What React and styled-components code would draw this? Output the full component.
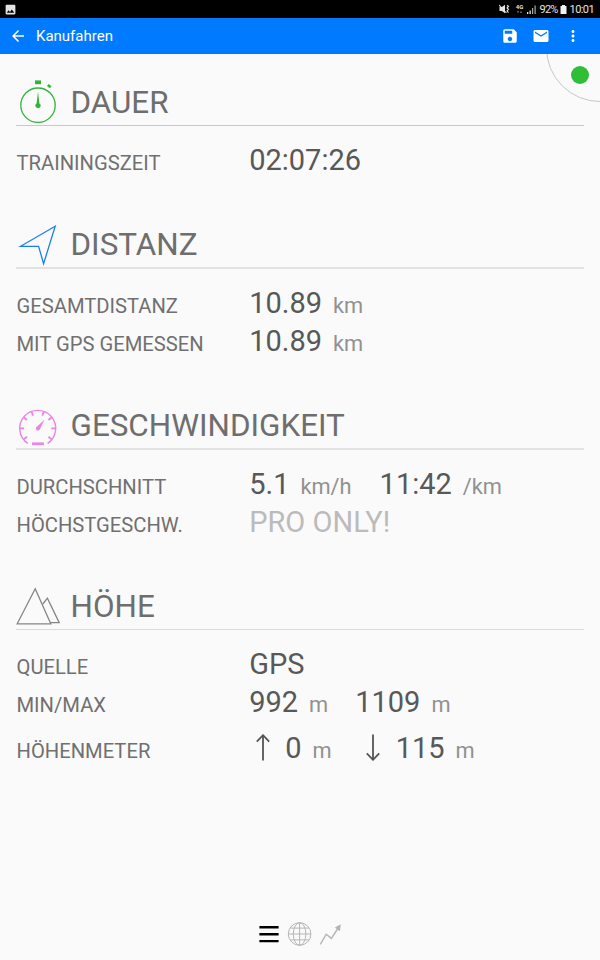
import React from 'react';
import styled, { createGlobalStyle } from 'styled-components';
import {
  MdArrowBack,
  MdSave,
  MdEmail,
  MdMoreVert,
  MdImage,
} from 'react-icons/md';

const GlobalStyle = createGlobalStyle`
  * {
    box-sizing: border-box;
  }
  body {
    margin: 0;
    background: #fafafa;
    font-family: Roboto, sans-serif;
  }
`;

const Screen = styled.div`
  display: flex;
  flex-direction: column;
  width: 600px;
  height: 960px;
  overflow: hidden;
  background: #fafafa;
`;

const StatusBar = styled.div`
  display: flex;
  align-items: center;
  justify-content: space-between;
  height: 18px;
  padding: 0 6px 0 4px;
  background: #000;
  color: #e4e4e4;
  svg {
    display: block;
  }
`;

const StatusGroup = styled.div`
  display: flex;
  align-items: center;
`;

const StatusText = styled.span`
  margin-left: 2.5px;
  margin-right: ${(props) => props.$after || 0}px;
  padding-top: 1px;
  font-size: 11px;
  line-height: 17px;
  letter-spacing: ${(props) => props.$tracking}px;
`;

const AppBar = styled.div`
  display: flex;
  align-items: center;
  height: 36px;
  padding: 0 18px 0 9px;
  background: #007aff;
  color: #fff;
  svg {
    display: block;
  }
`;

const AppTitle = styled.div`
  flex: 1;
  margin-left: 9px;
  font-size: 15px;
`;

const Actions = styled.div`
  display: flex;
  align-items: center;
  gap: 13.7px;
`;

const Content = styled.div`
  position: relative;
  flex: 1;
  display: flex;
  flex-direction: column;
  overflow: hidden;
  padding: 26px 16px 0;
`;

const GpsCorner = styled.div`
  position: absolute;
  top: -60px;
  right: -54px;
  width: 108px;
  height: 108px;
  border: 1px solid #c6c6c6;
  border-radius: 50%;
`;

const GpsDot = styled.div`
  position: absolute;
  top: 12px;
  right: 11px;
  width: 18px;
  height: 18px;
  border-radius: 50%;
  background: #2fbe36;
`;

const SectionBox = styled.section`
  height: ${(props) => props.$height}px;
`;

const Header = styled.div`
  display: flex;
  height: 45px;
  svg {
    display: block;
    flex: none;
    overflow: visible;
  }
`;

const Title = styled.h2`
  margin: 0 0 0 10.5px;
  font-size: 31.4px;
  font-weight: 400;
  line-height: 46px;
  color: #6e6e6e;
`;

const Rule = styled.div`
  height: ${(props) => (props.$soft ? 2 : 1)}px;
  margin-bottom: 15px;
  background: ${(props) => props.$color};
`;

const Row = styled.div`
  display: flex;
  align-items: baseline;
  height: ${(props) => (props.$tall ? 54 : 38)}px;
  line-height: ${(props) => (props.$tall ? 54 : 38)}px;
`;

const Label = styled.div`
  width: 232.5px;
  padding-left: 0.5px;
  font-size: 20.2px;
  color: #707070;
`;

const Value = styled.span`
  font-size: 29px;
  color: ${(props) => (props.$muted ? '#bbb' : '#585858')};
`;

const Values = styled.div`
  display: flex;
  align-items: baseline;
  margin-left: 0.7px;
`;

const Unit = styled.span`
  margin: 0 ${(props) => props.$after || 0}px 0 11px;
  font-size: 21.8px;
  color: #919191;
`;

const ArrowBox = styled.span`
  align-self: center;
  width: ${(props) => props.$width}px;
  padding-left: ${(props) => props.$inset || 0}px;
  padding-bottom: 4px;
  svg {
    display: block;
  }
`;

const BottomNav = styled.div`
  display: flex;
  justify-content: center;
  align-items: center;
  gap: 8px;
  height: 52px;
  margin-top: auto;
  padding-left: 2px;
  svg {
    display: block;
  }
`;

const MuteIcon = () => (
  <svg width='11' height='10' viewBox='0 0 11 10' fill='#e4e4e4'>
    <path d='M0.5 3h2.3L6 0.8v8.4L2.8 7H0.5z' />
    <path
      d='M0 1l7.4 8M8 1.2l1.5 1.2L8 4l1.5 1.3L8 7l1.5 1.6'
      fill='none'
      stroke='#e4e4e4'
      strokeWidth='1.1'
    />
  </svg>
);

const NetworkLabel = styled.span`
  display: flex;
  flex-direction: column;
  align-items: center;
  width: 9px;
  margin: 0 3px 0 5px;
  font-size: 6px;
  font-weight: 700;
  line-height: 6px;
`;

const DataArrows = () => (
  <svg width='5' height='4' viewBox='0 0 5 4' fill='#777'>
    <path d='M0 1h2L1 3.5zM3 3h2L4 0.5z' />
  </svg>
);

const SignalIcon = () => (
  <svg width='10' height='9' viewBox='0 0 10 9' fill='#e4e4e4'>
    <path d='M0 7h1.3v2H0zM2.5 5.5h1.3V9H2.5z' />
    <path d='M5 3h1.2v6H5zM7.5 0.5h1.2V9H7.5z' fill='#a8a8a8' />
  </svg>
);

const BatteryIcon = () => (
  <svg width='7' height='9' viewBox='0 0 7 9' fill='#f2f2f2'>
    <path d='M2 0h3v1h1.5v8h-6V1H2z' />
  </svg>
);

const StopwatchIcon = () => (
  <svg width='44' height='45' viewBox='0 0 44 45' fill='#2fb53a'>
    <circle
      cx='22'
      cy='25.2'
      r='17.2'
      fill='none'
      stroke='#2fb53a'
      strokeWidth='1.3'
    />
    <rect x='19' y='0.4' width='6' height='3.8' />
    <rect
      x='31.4'
      y='4.9'
      width='3.6'
      height='2.6'
      transform='rotate(40 33.2 6.2)'
    />
    <path d='M22 11.8l1.4 11.7a2.5 2.5 0 1 1-2.8 0z' />
  </svg>
);

const LocationIcon = () => (
  <svg width='44' height='45' viewBox='0 0 44 45'>
    <path
      d='M39.2 4.2L4.6 24.3h18l5 17.4z'
      fill='none'
      stroke='#1a7fec'
      strokeWidth='1.3'
    />
  </svg>
);

const TICKS = [-128, -90, -52, -20, 20, 52, 90, 128];

const GaugeIcon = () => (
  <svg
    width='44'
    height='45'
    viewBox='0 0 44 45'
    fill='none'
    stroke='#e986e6'
    strokeWidth='1.4'
  >
    <path d='M11.8 40.4A18 18 0 1 1 31.6 40.4' />
    {TICKS.map((angle) => (
      <path
        key={angle}
        d='M21.7 7.4v4.4'
        strokeWidth='1.9'
        transform={`rotate(${angle} 21.7 25.4)`}
      />
    ))}
    <path
      d='M28.4 16.8l-4.4 9.4a2.2 2.2 0 1 1-3-2.8z'
      fill='#e986e6'
      stroke='none'
    />
    <rect x='16' y='39.4' width='12' height='2.8' fill='#e986e6' stroke='none' />
  </svg>
);

const MountainIcon = () => (
  <svg
    width='44'
    height='45'
    viewBox='0 0 44 45'
    fill='none'
    stroke='#858585'
    strokeWidth='1.3'
  >
    <path d='M19.2 4.8L1.2 39.8h33.6z' />
    <path d='M26.8 20l4.6-5.8 11.8 24.5h-9' />
  </svg>
);

const Arrow = ({ down }) => (
  <svg width='16' height='27' viewBox='0 0 16 27'>
    <path
      d='M8 1v25.5M1.8 7.6L8 1.2l6.2 6.4'
      fill='none'
      stroke='#555'
      strokeWidth='1.8'
      transform={down ? 'rotate(180 8 13.5)' : undefined}
    />
  </svg>
);

const ListIcon = () => (
  <svg width='20' height='24' viewBox='0 0 20 24' fill='#000'>
    <path d='M0.4 4.1h19.2v2.5H0.4zM0.4 11h19.2v2.4H0.4zM0.4 17.9h19.2v2.3H0.4z' />
  </svg>
);

const GlobeIcon = () => (
  <svg
    width='25'
    height='24'
    viewBox='0 0 25 24'
    fill='none'
    stroke='#b5b5b5'
    strokeWidth='1'
  >
    <circle cx='12.6' cy='12' r='11.3' />
    <ellipse cx='12.6' cy='12' rx='6.3' ry='11.3' />
    <path d='M12.6 0.7v22.6M1.3 12h22.6M3.5 6.1h18.2M3.5 17.9h18.2' />
  </svg>
);

const TrendIcon = () => (
  <svg width='23' height='24' viewBox='0 0 23 24'>
    <path
      d='M0.3 22.5L6.2 12.2l5.2 4.2L18.5 5.5'
      fill='none'
      stroke='#b5b5b5'
      strokeWidth='1.4'
    />
    <path d='M20.8 2.2l-0.9 7-5.1-3.8z' fill='#b5b5b5' />
  </svg>
);

const Section = ({ icon, title, height, soft, line, children }) => (
  <SectionBox $height={height}>
    <Header>
      {icon}
      <Title>{title}</Title>
    </Header>
    <Rule $soft={soft} $color={line} />
    {children}
  </SectionBox>
);

const App = () => {
  return (
    <Screen>
      <GlobalStyle />
      <StatusBar>
        <MdImage size={13} />
        <StatusGroup>
          <MuteIcon />
          <NetworkLabel>
            4G
            <DataArrows />
          </NetworkLabel>
          <SignalIcon />
          <StatusText $after={2.5} $tracking={-0.8}>
            92%
          </StatusText>
          <BatteryIcon />
          <StatusText $tracking={-0.6}>10:01</StatusText>
        </StatusGroup>
      </StatusBar>
      <AppBar>
        <MdArrowBack size={18} />
        <AppTitle>Kanufahren</AppTitle>
        <Actions>
          <MdSave size={18} />
          <MdEmail size={18} />
          <MdMoreVert size={18} />
        </Actions>
      </AppBar>
      <Content>
        <GpsCorner />
        <GpsDot />
        <Section
          icon={<StopwatchIcon />}
          title='DAUER'
          height={142}
          line='#c8c8c8'
        >
          <Row>
            <Label>TRAININGSZEIT</Label>
            <Values>
              <Value>02:07:26</Value>
            </Values>
          </Row>
        </Section>
        <Section
          icon={<LocationIcon />}
          title='DISTANZ'
          height={181}
          line='#e2e2e2'
          soft
        >
          <Row>
            <Label>GESAMTDISTANZ</Label>
            <Values>
              <Value>10.89</Value>
              <Unit>km</Unit>
            </Values>
          </Row>
          <Row>
            <Label>MIT GPS GEMESSEN</Label>
            <Values>
              <Value>10.89</Value>
              <Unit>km</Unit>
            </Values>
          </Row>
        </Section>
        <Section
          icon={<GaugeIcon />}
          title='GESCHWINDIGKEIT'
          height={181}
          line='#e2e2e2'
          soft
        >
          <Row>
            <Label>DURCHSCHNITT</Label>
            <Values>
              <Value>5.1</Value>
              <Unit $after={28}>km/h</Unit>
              <Value>11:42</Value>
              <Unit>/km</Unit>
            </Values>
          </Row>
          <Row>
            <Label>HÖCHSTGESCHW.</Label>
            <Values>
              <Value $muted>PRO ONLY!</Value>
            </Values>
          </Row>
        </Section>
        <Section
          icon={<MountainIcon />}
          title='HÖHE'
          height={200}
          line='#dadada'
        >
          <Row>
            <Label>QUELLE</Label>
            <Values>
              <Value>GPS</Value>
            </Values>
          </Row>
          <Row>
            <Label>MIN/MAX</Label>
            <Values>
              <Value>992</Value>
              <Unit $after={27}>m</Unit>
              <Value>1109</Value>
              <Unit>m</Unit>
            </Values>
          </Row>
          <Row $tall>
            <Label>HÖHENMETER</Label>
            <Values>
              <ArrowBox $width={36} $inset={6}>
                <Arrow />
              </ArrowBox>
              <Value>0</Value>
              <Unit $after={33}>m</Unit>
              <ArrowBox $width={31}>
                <Arrow down />
              </ArrowBox>
              <Value>115</Value>
              <Unit>m</Unit>
            </Values>
          </Row>
        </Section>
        <BottomNav>
          <ListIcon />
          <GlobeIcon />
          <TrendIcon />
        </BottomNav>
      </Content>
    </Screen>
  );
};

export default App;
